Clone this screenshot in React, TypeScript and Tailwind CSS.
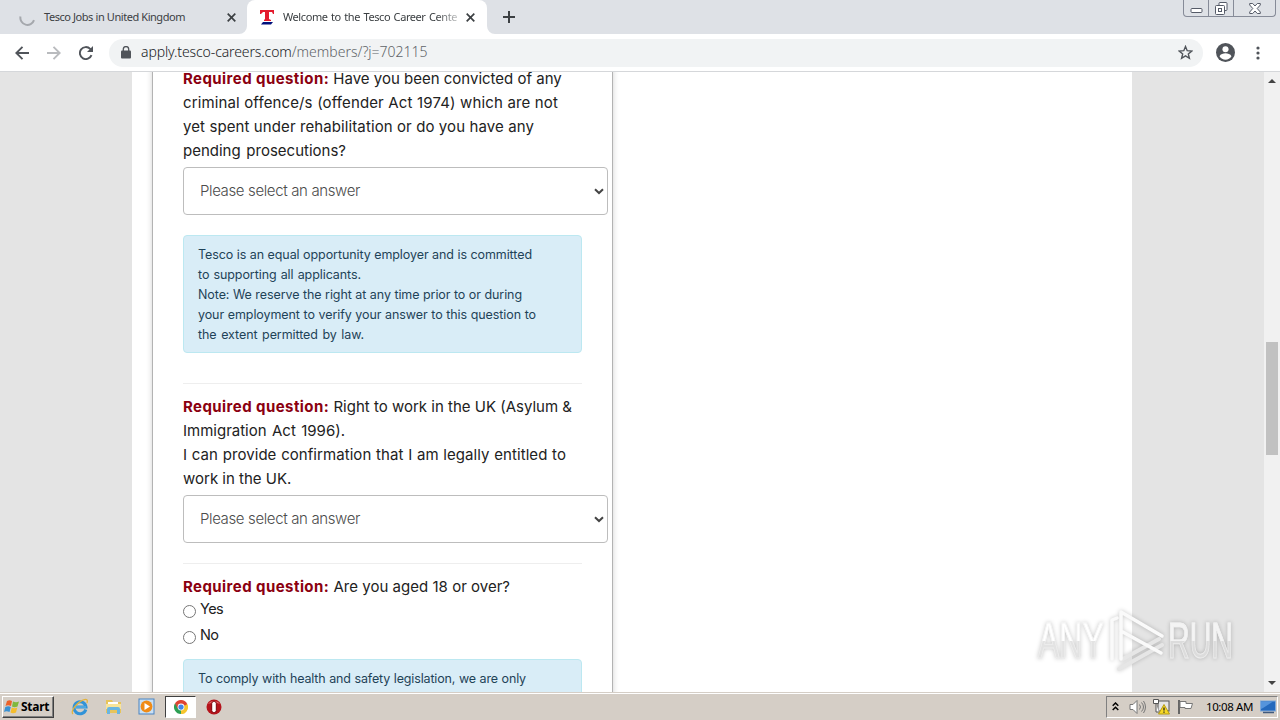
import { ReactNode } from "react";

const tahoma = "font-['Noto_Sans','DejaVu_Sans',sans-serif]";

/* One line of copy, word spacing fills the given width */
function Line({
  className,
  children,
}: {
  className: string;
  children: ReactNode;
}) {
  return (
    <div className={`whitespace-nowrap [text-align-last:justify] ${className}`}>
      {children}
    </div>
  );
}

function Required() {
  return (
    <b className="font-bold text-[#8b0010] tracking-[0.43px]">
      Required question:
    </b>
  );
}

function SelectBox() {
  return (
    <button className="mt-1 flex h-12 w-[425px] items-center justify-between rounded-[4px] border border-[#bdbdbd] bg-white pl-4 pr-[3px]">
      <Line className="w-[160px] text-[15px] font-light tracking-[-0.38px] text-[#4c4c4c]">
        Please select an answer
      </Line>
      <svg width="10" height="7" viewBox="0 0 10 7" fill="none">
        <path d="M1 1.2 5 5 9 1.2" stroke="#444" strokeWidth="2" />
      </svg>
    </button>
  );
}

function Tabs() {
  return (
    <div className={`flex h-[34px] bg-[#dee1e6] text-[11px] text-[#3c4043] ${tahoma}`}>
      <div className="flex w-[247px] items-center pl-[19px]">
        <svg width="17" height="17" viewBox="0 0 17 17" fill="none">
          <path d="M1.500 7.500a7 7 0 0 0 13.500 3.600" stroke="#a5a8ad" strokeWidth="2" />
        </svg>
        <Line className="ml-[8px] w-[141px] tracking-[-0.46px]">
          Tesco Jobs in United Kingdom
        </Line>
        <Close className="ml-[42px]" />
      </div>
      <div className="relative flex w-[240px] items-center rounded-t-lg bg-white pl-[13px]">
        <svg width="14" height="16" viewBox="0 0 14 16">
          <path d="M0 1h14v4h-1L12 3H9v7l2 1v1H4v-1l1-1V3H3L1 5H0z" fill="#e31b2e" />
          <path d="M3 13h10l-2 2.500H1z" fill="#00117c" />
        </svg>
        <Line className="ml-[9px] w-[174px] tracking-[-0.42px] [mask-image:linear-gradient(to_right,black_88%,rgba(0,0,0,0.3))]">
          Welcome to the Tesco Career Cente
        </Line>
        <Close className="ml-[9px]" />
        <svg className="absolute -left-2 bottom-0" width="8" height="8">
          <path d="M8 0v8H0a8 8 0 0 0 8-8" fill="#fff" />
        </svg>
        <svg className="absolute -right-2 bottom-0" width="8" height="8">
          <path d="M0 0v8h8a8 8 0 0 1-8-8" fill="#fff" />
        </svg>
      </div>
      <svg className="ml-4 mt-[11px]" width="12" height="12" viewBox="0 0 12 12">
        <path d="M6 0v12M0 6h12" stroke="#3c4043" strokeWidth="2" />
      </svg>
      <div className="ml-auto mr-[4px] flex h-[17px] divide-x divide-[#868b98] rounded-b-[4px] border border-t-0 border-[#868b98]">
        <div className="flex w-[25px] items-end justify-center pb-[3px]">
          <svg width="13" height="5" viewBox="0 0 13 5">
            <rect x="1" y=".5" width="11" height="4" rx="1" fill="#fff" stroke="#555b68" />
          </svg>
        </div>
        <div className="flex w-[25px] items-center justify-center">
          <svg width="13" height="13" viewBox="0 0 13 13" fill="#fff" stroke="#555b68">
            <rect x="4" y=".5" width="8" height="8" rx="1" />
            <rect x=".5" y="3.5" width="9" height="9" rx="1" />
            <rect x="3.5" y="6.5" width="3" height="3" />
          </svg>
        </div>
        <div className="flex w-[41px] items-center justify-center">
          <svg width="12" height="11" viewBox="0 0 12 11">
            <path d="M.7.5h3L6 3 8.3.5h3V2L8.200 5.500 11.300 9v1.500h-3L6 8l-2.300 2.500h-3V9l3.100-3.500L.7 2z" fill="#fff" stroke="#555b68" />
          </svg>
        </div>
      </div>
    </div>
  );
}

function Close({ className }: { className: string }) {
  return (
    <svg className={className} width="9" height="9" viewBox="0 0 9 9">
      <path d="m.7.7 7.600 7.600m0-7.600L.7 8.300" stroke="#3c4043" strokeWidth="1.700" />
    </svg>
  );
}

function Toolbar() {
  return (
    <div className={`flex h-[38px] items-center border-b border-[#d5d7da] bg-white pl-[15px] text-[#5f6368] ${tahoma}`}>
      <svg width="14" height="14" viewBox="0 0 14 14" fill="none" stroke="#50545a" strokeWidth="1.900">
        <path d="M14 7H1.500M7.500.8 1.300 7l6.200 6.200" />
      </svg>
      <svg className="ml-[18px]" width="14" height="14" viewBox="0 0 14 14" fill="none" stroke="#b9bbbe" strokeWidth="1.900">
        <path d="M0 7h12.500M6.500.8 12.700 7l-6.200 6.200" />
      </svg>
      <svg className="ml-[18px]" width="14" height="14" viewBox="0 0 14 14">
        <path d="M12.500 9.200A6 6 0 1 1 11.200 2.900L12 3.700" fill="none" stroke="#50545a" strokeWidth="1.900" />
        <path d="M14 0v6H8z" fill="#50545a" />
      </svg>
      <div className="ml-[16px] flex h-7 w-[1094px] items-center rounded-full bg-[#f1f3f4] pl-[12px] pr-[10px]">
        <svg width="10" height="13" viewBox="0 0 10 13">
          <rect y="4.500" width="10" height="8" rx="1" fill="#50545a" />
          <path d="M2.300 5V3.300a2.700 2.700 0 0 1 5.400 0V5" fill="none" stroke="#50545a" strokeWidth="1.300" />
        </svg>
        <div className="ml-[10px] -mt-[2px] whitespace-nowrap text-[14px] font-light">
          <span className="text-[#202124] tracking-[-0.11px]">apply.tesco-careers.com</span>
          <span>/members/?j=702115</span>
        </div>
        <svg className="ml-auto" width="15" height="15" viewBox="0 0 15 15">
          <path d="m7.500 1.500 1.700 4.200 4.600.3-3.500 2.900 1.100 4.400-3.900-2.400-3.900 2.400 1.100-4.400L1.200 6l4.600-.3z" fill="none" stroke="#50545a" strokeWidth="1.400" />
        </svg>
      </div>
      <svg className="ml-[13px]" width="19" height="19" viewBox="0 0 20 20">
        <circle cx="10" cy="10" r="10" fill="#50545a" />
        <circle cx="10" cy="6.500" r="3.200" fill="#fff" />
        <path d="M3.700 14c1-2.500 4-3.200 6.300-3.200s5.300.7 6.300 3.200a7.400 7.400 0 0 1-12.600 0z" fill="#fff" />
      </svg>
      <svg className="ml-[21px]" width="4" height="14" viewBox="0 0 4 14" fill="#50545a">
        <circle cx="2" cy="2" r="1.600" />
        <circle cx="2" cy="7" r="1.600" />
        <circle cx="2" cy="12" r="1.600" />
      </svg>
    </div>
  );
}

function Watermark() {
  return (
    <div className="absolute left-[1038px] top-[609px] flex h-[64px] items-center text-[50px] leading-none drop-shadow-[0_0_2px_rgba(0,0,0,0.22)] font-['Liberation_Sans',sans-serif]">
      <div className="w-[65px]">
        <span className="inline-block origin-left scale-x-[0.64] bg-linear-to-b from-white from-50% to-[#e3e3e3] to-50% bg-clip-text text-transparent [-webkit-text-stroke:1px_rgba(240,240,240,0.8)]">
          ANY
        </span>
      </div>
      <svg className="ml-[4px]" width="60" height="64" viewBox="0 0 60 64" fill="none" strokeWidth="4" strokeLinejoin="round" strokeLinecap="round">
        <path d="M14 51 52 30M12 60l43-24" stroke="#e6e6e6" />
        <path d="M5 50V11l5-2M14 50V3l41 24M14 22l40 22" stroke="#fafafa" strokeWidth="3.500" />
      </svg>
      <div className="ml-[1px] w-[66px]">
        <span className="inline-block origin-left scale-x-[0.6] bg-linear-to-b from-[#f4f4f4] from-50% to-[#dcdcdc] to-50% bg-clip-text text-transparent [-webkit-text-stroke:1px_rgba(240,240,240,0.8)]">
          RUN
        </span>
      </div>
    </div>
  );
}

function Radio({ label, className }: { label: string; className: string }) {
  return (
    <label className={`flex text-[14.5px] tracking-[-0.6px] ${className}`}>
      <span className="mt-[10px] h-[13px] w-[13px] rounded-full border border-[#767676] bg-white" />
      <span className="ml-[4px] mt-[2px]">{label}</span>
    </label>
  );
}

function Taskbar() {
  return (
    <div className={`flex h-7 items-center border-t border-[#d5cec6] bg-[#d5cec6] text-[11.5px] text-black shadow-[inset_0_1px_0_#fff] ${tahoma}`}>
      <div className="ml-[2px] flex h-[22px] w-[52px] items-center border border-b-[#404040] border-l-white border-r-[#404040] border-t-white pl-[1px] shadow-[inset_-1px_-1px_0_#808080]">
        <svg width="16" height="16" viewBox="0 0 16 16">
          <path d="M3 2c2-1 3-1 5 0L7 7C5 6 3 6 1.500 7z" fill="#ec6228" />
          <path d="M9 2.500c2 1 4 1 6 0L13.500 7.500c-2 1-4 1-5.500 0z" fill="#80b83c" />
          <path d="M1.300 8c2-1 4-1 5.500 0L5.500 13c-2-1-4-1-5.500 0z" fill="#3a91d2" />
          <path d="M7.800 8.500c2 1 4 1 5.500 0L12 13.500c-2 1-4 1-5.500 0z" fill="#f5bd2d" />
        </svg>
        <b className="ml-[1px] text-[12px] tracking-[-0.25px]">Start</b>
      </div>
      <svg className="ml-[17px]" width="18" height="18" viewBox="0 0 18 18" fill="none">
        <path d="M14.800 11.500A6 6 0 1 1 15 9H5" stroke="#3193d8" strokeWidth="3" />
        <path d="M15 9H5" stroke="#66bbed" strokeWidth="1" />
        <path d="M2 16C-1 14 5 5 12 2c4-1.500 5 0 4 3" stroke="#e3b33c" strokeWidth="1.300" />
      </svg>
      <svg className="ml-[16px]" width="17" height="17" viewBox="0 0 17 17">
        <path d="M1 2h6l1 2h8v11H1z" fill="#e7c45b" />
        <path d="M3 4h10v5H3z" fill="#fff" />
        <path d="M1 6h15v5H1z" fill="#f8e49a" />
        <path d="M2 16v-5q0-2 2-2h9q2 0 2 2v5h-3v-4H5v4z" fill="#69b5e1" />
      </svg>
      <svg className="ml-[16px]" width="17" height="17" viewBox="0 0 17 17">
        <rect x="1" y="1" width="15" height="15" fill="#c9e0f4" stroke="#4a83c1" />
        <circle cx="8.500" cy="8.500" r="5.900" fill="#f08b16" />
        <path d="m6.500 5 5.500 3.500L6.500 12z" fill="#fff" />
      </svg>
      <div className="ml-[10px] flex h-[22px] w-[31px] items-center justify-center border border-b-white border-l-[#404040] border-r-white border-t-[#404040] bg-white">
        <svg width="14" height="14" viewBox="0 0 16 16">
          <path d="M8 8 1.070 4A8 8 0 0 1 14.930 4z" fill="#df4332" />
          <path d="M8 8 14.930 4A8 8 0 0 1 8 16z" fill="#f6c52d" />
          <path d="M8 8v8A8 8 0 0 1 1.070 4z" fill="#2c9f53" />
          <path d="M8 4h7l-3.500 6zM4.500 10 1.070 4l4 2z" fill="#df4332" />
          <path d="M11.500 6H15q2 5-3 9l-4 1 3.500-6z" fill="#f6c52d" />
          <circle cx="8" cy="8" r="3.900" fill="#fff" />
          <circle cx="8" cy="8" r="3" fill="#4285e8" />
        </svg>
      </div>
      <svg className="ml-[10px]" width="16" height="16" viewBox="0 0 16 16">
        <circle cx="8" cy="8" r="7.500" fill="#b5131b" />
        <path d="M2 5a7 6 0 0 1 12 0q-6-3-12 0" fill="#e5696b" />
        <rect x="5.700" y="2.500" width="4.600" height="11" rx="2" fill="#fff" stroke="#7b0009" />
      </svg>
      <div className="ml-auto mr-[2px] flex h-[22px] w-[172px] items-center border border-b-white border-l-[#808080] border-r-white border-t-[#808080] pl-[5px]">
        <svg width="7" height="9" viewBox="0 0 7 9" fill="none" stroke="#000" strokeWidth="1.500">
          <path d="m.7 3.700 2.800-2.700 2.800 2.700M.7 8l2.800-2.700L6.300 8" />
        </svg>
        <svg className="ml-[10px]" width="17" height="16" viewBox="0 0 17 16" fill="none" stroke="#777">
          <path d="M1 5.500h3L8 1.500v13l-4-4H1z" fill="#fff" />
          <path d="M10.500 5.500q2 2.500 0 5M12.500 3.500q4 4.500 0 9M14.500 2q4 6 0 12" />
        </svg>
        <svg className="ml-[7px]" width="17" height="17" viewBox="0 0 17 17">
          <rect x="5" y="3" width="11" height="10" fill="#e5e5e5" stroke="#555" />
          <path d="M.5 1.500h5v4h-5zM3 6v8h3" fill="#fff" stroke="#555" />
          <path d="m11 6.500 5.500 9.500H5.500z" fill="#f8d926" stroke="#b59b13" />
          <path d="M11 9.500v3m0 1v1.200" stroke="#222" strokeWidth="1.300" />
        </svg>
        <svg className="ml-[7px]" width="17" height="16" viewBox="0 0 17 16">
          <path d="M2 1v14" stroke="#666" strokeWidth="2" />
          <path d="M3 2.500h6v2h6.500L14 9.500H8v-1H3z" fill="#fff" stroke="#777" />
        </svg>
        <span className="ml-[12px] w-[48px] whitespace-nowrap text-[11.5px] tracking-[-0.4px]">
          10:08 AM
        </span>
        <svg className="ml-[6px]" width="16" height="14" viewBox="0 0 16 14">
          <rect x=".5" y="1" width="15" height="10" fill="#2469bd" stroke="#7fa8d8" />
          <path d="M1 1.500h12L3 8 1 9z" fill="#5594dc" />
          <path d="M3 12.500h11" stroke="#405a7d" strokeWidth="1.500" />
        </svg>
      </div>
    </div>
  );
}

export default function App() {
  return (
    <div className="relative flex h-[720px] w-[1280px] flex-col overflow-hidden bg-white">
      <Tabs />
      <Toolbar />

      {/* PAGE */}
      <div className="flex h-[620px] overflow-hidden bg-[#e4e4e4] font-['Inter',sans-serif] text-[15px] leading-6 text-[#222]">
        <div className="ml-[132px] w-[1000px] bg-white pl-[20px]">
          <div className="-mt-[5px] h-[640px] w-[461px] border-x border-[#b3b3b3] pl-[30px] shadow-[0_0_6px_rgba(0,0,0,0.18)]">
            <Line className="w-[378px]">
              <Required /> Have you been convicted of any
            </Line>
            <Line className="w-[375px] tracking-[0.12px]">
              criminal offence/s (offender Act 1974) which are not
            </Line>
            <Line className="w-[350px] tracking-[0.1px]">
              yet spent under rehabilitation or do you have any
            </Line>
            <Line className="w-[163px]">pending prosecutions?</Line>
            <SelectBox />

            <div className="mt-5 h-[118px] w-[399px] rounded-[4px] border border-[#bce8f1] bg-[#d9edf7] px-[14px] pt-[9px] text-[12.5px] leading-5 tracking-[-0.08px] text-[#1f4358]">
              <Line className="w-[334px]">
                Tesco is an equal opportunity employer and is committed
              </Line>
              <Line className="w-[163px]">to supporting all applicants.</Line>
              <Line className="w-[324px]">
                Note: We reserve the right at any time prior to or during
              </Line>
              <Line className="w-[338px]">
                your employment to verify your answer to this question to
              </Line>
              <Line className="w-[166px]">the extent permitted by law.</Line>
            </div>

            <hr className="mt-[30px] w-[399px] border-[#eee]" />

            <Line className="mt-[11px] w-[389px]">
              <Required /> Right to work in the UK (Asylum &amp;
            </Line>
            <Line className="w-[162px]">Immigration Act 1996).</Line>
            <Line className="w-[383px] tracking-[0.06px]">
              I can provide confirmation that I am legally entitled to
            </Line>
            <Line className="w-[108px]">work in the UK.</Line>
            <SelectBox />

            <hr className="mt-5 w-[399px] border-[#eee]" />

            <Line className="mt-[11px] w-[327px]">
              <Required /> Are you aged 18 or over?
            </Line>
            <Radio label="Yes" className="-mt-[4px] h-[26px]" />
            <Radio label="No" className="h-[26px]" />

            <div className="mt-3 h-[118px] w-[399px] rounded-[4px] border border-[#bce8f1] bg-[#d9edf7] px-[14px] pt-[9px] text-[12.5px] leading-5 tracking-[-0.15px] text-[#1f4358]">
              <Line className="w-[328px]">
                To comply with health and safety legislation, we are only
              </Line>
            </div>
          </div>
        </div>

        {/* SCROLLBAR */}
        <div className="ml-auto flex w-4 flex-col items-center bg-[#f1f1f1]">
          <svg className="mt-[7px]" width="8" height="4" viewBox="0 0 8 4">
            <path d="M0 4 4 0l4 4z" fill="#444" />
          </svg>
          <div className="mt-[259px] h-[113px] w-3 bg-[#c1c1c1]" />
          <svg className="mb-[7px] mt-auto" width="8" height="4" viewBox="0 0 8 4">
            <path d="m0 0 4 4 4-4z" fill="#444" />
          </svg>
        </div>
      </div>

      <Taskbar />
      <Watermark />
    </div>
  );
}
